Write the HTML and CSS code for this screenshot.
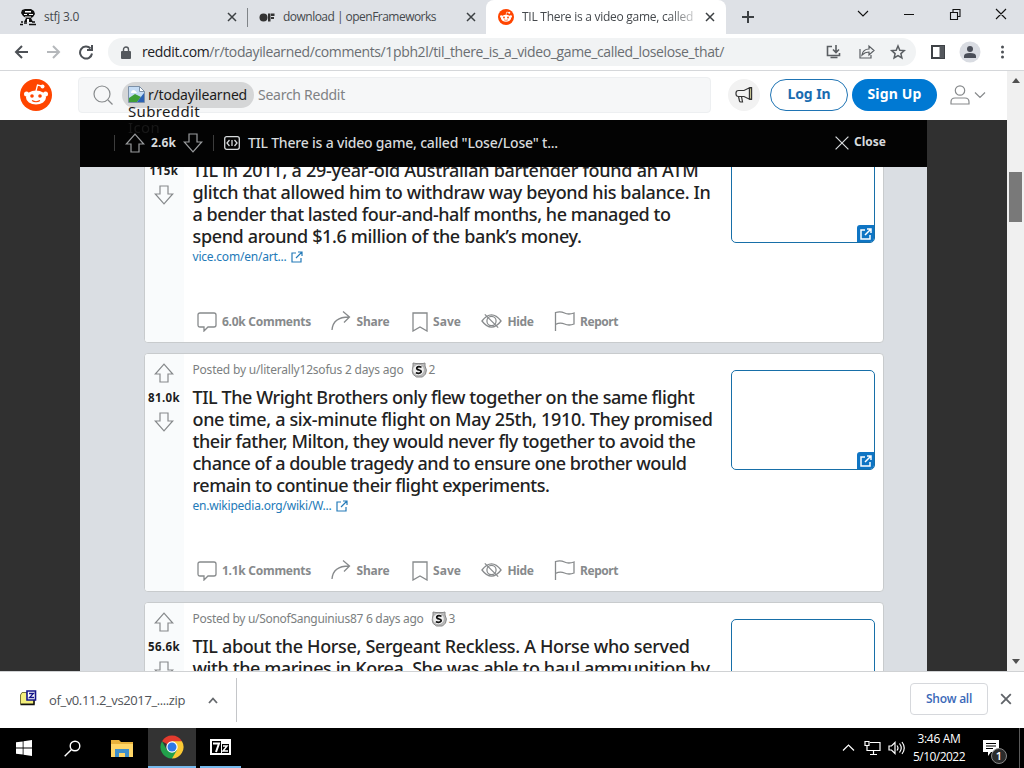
FILE: index.html
```html
<!DOCTYPE html>
<html lang="en">
<head>
<meta charset="utf-8">
<title>TIL There is a video game, called "Lose/Lose"</title>
<link rel="stylesheet" href="styles.css">
</head>
<body>
<svg class="defs" width="0" height="0">
  <symbol id="up" viewBox="0 0 20 20"><path d="M10 1.200 18.700 11H14v8H6v-8H1.300z"/></symbol>
  <symbol id="down" viewBox="0 0 20 20"><path d="M10 18.800 18.700 9H14V1H6v8H1.300z"/></symbol>
  <symbol id="x" viewBox="0 0 10 10"><path d="M1 1l8 8M9 1 1 9"/></symbol>
  <symbol id="snoo" viewBox="0 0 32 32"><circle cx="16" cy="16" r="16" fill="#ff4500"/><path d="M16 12l1.500-6 5 1.200" fill="none" stroke="#fff" stroke-width="1.300"/><circle cx="22.500" cy="7.500" r="2" fill="#fff"/><circle cx="6.500" cy="15" r="2.500" fill="#fff"/><circle cx="25.500" cy="15" r="2.500" fill="#fff"/><ellipse cx="16" cy="18.500" rx="10" ry="7" fill="#fff"/><circle cx="12" cy="17" r="1.800" fill="#ff4500"/><circle cx="20" cy="17" r="1.800" fill="#ff4500"/><path d="M12 21.500q4 2.500 8 0" fill="none" stroke="#ff4500" stroke-width="1.200"/></symbol>
  <symbol id="ext" viewBox="0 0 12 12"><path d="M5 2H1v9h9V7M7 1h4v4M11 1 5 7"/></symbol>
  <symbol id="comment" viewBox="0 0 20 20"><path d="M3 1h14q2 0 2 2v10q0 2-2 2h-6l-4 4v-4H3q-2 0-2-2V3q0-2 2-2z"/></symbol>
  <symbol id="share" viewBox="0 0 20 20"><path d="M1 19Q2 6 18 6M12 .500 18.500 6 13 11.500"/></symbol>
  <symbol id="save" viewBox="0 0 16 20"><path d="M1 1h14v18l-7-4-7 4z"/></symbol>
  <symbol id="hide" viewBox="0 0 22 16"><path d="M1 8Q11-5 21 8 11 21 1 8zM4 1l14 14"/><circle cx="11" cy="8" r="4.800"/></symbol>
  <symbol id="flag" viewBox="0 0 21 20"><path d="M1.500 20V1.500q5-1.500 9 .500t9.500 0V13q-5 2-9.500 0t-9 .500"/></symbol>
  <symbol id="award" viewBox="0 0 16 16"><path d="M2 4V1l3 .500h7L14 1v3q2.500 4 .500 8l-3 3h-6Q1 13 1.200 9z" fill="#bbb" stroke="#888"/><circle cx="7.500" cy="8" r="5.800" fill="#eee" stroke="#999" stroke-width=".600"/><path d="M10.500 5.200Q7 4 5.800 5.700 5.300 7.300 8 8t2 2.300Q8.500 12 4.800 10.800" fill="none" stroke="#111" stroke-width="1.700"/></symbol>
</svg>

<div class="tabs">
  <div class="tab tab-a">
    <svg width="18" height="18" viewBox="0 0 18 18"><path d="M3 2l3-1h6l3 2 1 3-2 3-2 1 2 4H5l2-4-3-2-2-3z" fill="#111"/><path d="M6 3h6v1.500H6zM5 6h3v1H5zm5 0h4v1h-4zM6 8.500h6v1H6zM8 11h2v3H8z" fill="#fff"/><path d="M1 16.500h3M5 15h3M10 16.500h7M2 14h2M13 14h3" stroke="#111" stroke-width="1.500"/></svg>
    <span class="tab-name" data-w="35">stfj 3.0</span>
    <svg class="tab-x" width="10" height="10"><use href="#x"/></svg>
  </div>
  <div class="tab tab-b">
    <svg width="16" height="9" viewBox="0 0 16 9"><circle cx="4.500" cy="4.500" r="4" fill="#333"/><path d="M9 .500h2.500v8H9zM12 .500h3.500V3H12zM12 4h3v2h-3z" fill="#333"/></svg>
    <span class="tab-name" data-w="153">download | openFrameworks</span>
    <svg class="tab-x" width="10" height="10"><use href="#x"/></svg>
  </div>
  <div class="tab tab-c">
    <svg width="16" height="16"><use href="#snoo"/></svg>
    <span class="tab-name fade" data-w="171">TIL There is a video game, called</span>
    <svg class="tab-x" width="10" height="10"><use href="#x"/></svg>
  </div>
  <div class="tab-rest">
    <svg class="plus" width="12" height="12" viewBox="0 0 12 12"><path d="M6 0v12M0 6h12"/></svg>
    <svg class="win" width="150" height="14" viewBox="0 0 150 14"><path d="M1 4l5 5 5-5M47 7.500h10M93.500 5.500h7v7h-7zM96 5V2.500h7v7H101M139 2l10 10M149 2l-10 10"/></svg>
  </div>
</div>

<div class="toolbar">
  <svg class="nav" width="80" height="16" viewBox="0 0 80 16"><path d="M14 8H2M8 2 2 8l6 6" stroke="#4d5156"/><path d="M33 8h12M39 2l6 6-6 6" stroke="#b5b8bb"/><path d="M76.500 4.500A6 6 0 1 0 78 9.500M78 1v5h-5" stroke="#4d5156"/></svg>
  <div class="omnibox">
    <svg width="10" height="13" viewBox="0 0 10 13"><path d="M1 5h8q1 0 1 1v6q0 1-1 1H1q-1 0-1-1V6q0-1 1-1z" fill="#54585d"/><path d="M2.500 5V3.500a2.500 2.500 0 0 1 5 0V5" fill="none" stroke="#54585d" stroke-width="1.400"/></svg>
    <span class="url" data-w="582"><b>reddit.com</b>/r/todayilearned/comments/1pbh2l/til_there_is_a_video_game_called_loselose_that/</span>
    <svg class="omni-icons" width="80" height="16" viewBox="0 0 80 16"><path d="M6 2.500H1.500v9h12V9M4.500 13.500h7M10 1v7M7 5.500l3 3 3-3" stroke-width="1.600"/><path d="M34 5v9h11v-3M36 11q1-6 7-6V2l5 4.500-5 4.500V8q-4 0-7 3z" stroke-width="1.200"/><path d="M72 2l1.800 4.200 4.500.400-3.400 3 1 4.400-3.900-2.400L68.100 14l1-4.400-3.400-3 4.500-.400z" stroke-width="1.500"/></svg>
  </div>
  <svg class="right-icons" width="76" height="22" viewBox="0 0 76 22"><path d="M2 5h12v12H2z" fill="none" stroke="#3e4246" stroke-width="2"/><path d="M9.500 5H14v12H9.500z" fill="#54585d"/><circle cx="40" cy="11" r="10.500" fill="#d9dce2"/><circle cx="40" cy="8" r="3" fill="#4a4e58"/><path d="M34 17v-2q0-3 6-3t6 3v2z" fill="#4a4e58"/><g fill="#4d5156"><circle cx="72.500" cy="6" r="1.500"/><circle cx="72.500" cy="11" r="1.500"/><circle cx="72.500" cy="16" r="1.500"/></g></svg>
</div>

<div class="viewport">
  <div class="page">
    <header class="header">
      <svg class="logo" width="32" height="32"><use href="#snoo"/></svg>
      <div class="search">
        <svg width="20" height="20" viewBox="0 0 20 20" fill="none" stroke="#878a8c" stroke-width="1.200"><circle cx="9" cy="9" r="8"/><path d="M15 15l4.500 4.500"/></svg>
        <div class="chip">
          <svg width="17" height="17" viewBox="0 0 17 17"><path d="M.500.500h11l5 5v11H.500z" fill="#c5dcf5" stroke="#7d91a8"/><path d="M1 16v-4l6-4 6 3-4 5z" fill="#3f9f38"/><path d="M16 7v9H9z" fill="#2c62b5"/><path d="M3 7q0-3 3-3 2 1 3 3z" fill="#fff"/><path d="M11.500.500v5h5z" fill="#fff" stroke="#7d91a8"/></svg>
          <span data-w="99">r/todayilearned</span>
          <div class="alt"><span data-w="72">Subreddit</span><span class="ghost" data-w="32">Icon</span></div>
        </div>
        <span class="hint" data-w="87">Search Reddit</span>
      </div>
      <div class="horn"><svg width="18" height="17" viewBox="0 0 18 17" fill="none" stroke="#333" stroke-width="1.200"><path d="M1 7q0-2.500 2.500-2.500H9L15 1.500h1.500v12H15L9 10.500H3.500Q1 10.500 1 8zM14.500 2v11M3.500 10.500l1 4.500q.300 1 1.300 1h1.700l-1-5.500"/><path d="M14.500 2h2v11h-2z" fill="#e8e4a8"/></svg></div>
      <div class="btn login"><span data-w="43">Log In</span></div>
      <div class="btn signup"><span data-w="54">Sign Up</span></div>
      <svg class="user" width="36" height="20" viewBox="0 0 36 20" fill="none" stroke="#878a8c" stroke-width="1.200"><circle cx="10" cy="5.500" r="4.700"/><path d="M1 19v-2q0-4 4-4h10q4 0 4 4v2zM25 7.500l5 5 5-5"/></svg>
    </header>

    <div class="stage">
      <div class="overlay">
        <div class="bar">
          <i class="rule r1"></i>
          <svg class="ic" width="20" height="20"><use href="#up"/></svg>
          <b class="bar-score"><span data-w="25">2.6k</span></b>
          <svg class="ic" width="20" height="20"><use href="#down"/></svg>
          <i class="rule r2"></i>
          <svg class="code" width="16" height="14" viewBox="0 0 16 14"><rect x=".700" y=".700" width="14.600" height="12.600" rx="2"/><path d="M5.500 4 3 7l2.500 3M10.500 4 13 7l-2.500 3M8 4v6"/></svg>
          <span class="bar-title" data-w="310">TIL There is a video game, called "Lose/Lose" t...</span>
          <svg class="bar-x" width="16" height="16"><use href="#x"/></svg>
          <b class="close"><span data-w="32">Close</span></b>
        </div>
        <div class="feed">
          <article class="card short">
            <div class="votes"><svg class="ic" width="20" height="20"><use href="#up"/></svg><b><span data-w="29">115k</span></b><svg class="ic" width="20" height="20"><use href="#down"/></svg></div>
            <div class="body">
              <div class="meta"></div>
              <h3><span data-w="506">TIL in 2011, a 29-year-old Australian bartender found an ATM</span><span data-w="518">glitch that allowed him to withdraw way beyond his balance. In</span><span data-w="478">a bender that lasted four-and-half months, he managed to</span><span data-w="389">spend around $1.6 million of the bank’s money.</span></h3>
              <div class="link"><span data-w="94">vice.com/en/art...</span><svg class="ic" width="12" height="12"><use href="#ext"/></svg></div>
              <div class="actions">
                <svg class="ic" width="20" height="20"><use href="#comment"/></svg><span class="a1" data-w="89">6.0k Comments</span>
                <svg class="ic up2" width="20" height="20"><use href="#share"/></svg><span class="a2" data-w="33">Share</span>
                <svg class="ic" width="16" height="20"><use href="#save"/></svg><span class="a3" data-w="28">Save</span>
                <svg class="ic up1" width="21" height="16"><use href="#hide"/></svg><span class="a4" data-w="26">Hide</span>
                <svg class="ic up1" width="21" height="20"><use href="#flag"/></svg><span class="a5" data-w="38">Report</span>
              </div>
            </div>
            <div class="thumb"><i><svg class="ic" width="12" height="12"><use href="#ext"/></svg></i></div>
          </article>

          <article class="card">
            <div class="votes"><svg class="ic" width="20" height="20"><use href="#up"/></svg><b><span data-w="32">81.0k</span></b><svg class="ic" width="20" height="20"><use href="#down"/></svg></div>
            <div class="body">
              <div class="meta"><span data-w="211">Posted by u/literally12sofus 2 days ago</span><svg width="16" height="16"><use href="#award"/></svg><span>2</span></div>
              <h3><span data-w="502">TIL The Wright Brothers only flew together on the same flight</span><span data-w="520">one time, a six-minute flight on May 25th, 1910. They promised</span><span data-w="503">their father, Milton, they would never fly together to avoid the</span><span data-w="494">chance of a double tragedy and to ensure one brother would</span><span data-w="357">remain to continue their flight experiments.</span></h3>
              <div class="link"><span data-w="139">en.wikipedia.org/wiki/W...</span><svg class="ic" width="12" height="12"><use href="#ext"/></svg></div>
              <div class="actions">
                <svg class="ic" width="20" height="20"><use href="#comment"/></svg><span class="a1" data-w="89">1.1k Comments</span>
                <svg class="ic up2" width="20" height="20"><use href="#share"/></svg><span class="a2" data-w="33">Share</span>
                <svg class="ic" width="16" height="20"><use href="#save"/></svg><span class="a3" data-w="28">Save</span>
                <svg class="ic up1" width="21" height="16"><use href="#hide"/></svg><span class="a4" data-w="26">Hide</span>
                <svg class="ic up1" width="21" height="20"><use href="#flag"/></svg><span class="a5" data-w="38">Report</span>
              </div>
            </div>
            <div class="thumb"><i><svg class="ic" width="12" height="12"><use href="#ext"/></svg></i></div>
          </article>

          <article class="card">
            <div class="votes"><svg class="ic" width="20" height="20"><use href="#up"/></svg><b><span data-w="32">56.6k</span></b><svg class="ic" width="20" height="20"><use href="#down"/></svg></div>
            <div class="body">
              <div class="meta"><span data-w="231">Posted by u/SonofSanguinius87 6 days ago</span><svg width="16" height="16"><use href="#award"/></svg><span>3</span></div>
              <h3><span data-w="497">TIL about the Horse, Sergeant Reckless. A Horse who served</span><span data-w="517">with the marines in Korea. She was able to haul ammunition by</span></h3>
            </div>
            <div class="thumb"></div>
          </article>
        </div>
      </div>
    </div>
  </div>
  <div class="scroll">
    <svg width="8" height="5" viewBox="0 0 8 5"><path d="M0 5 4 0l4 5z" fill="#505050"/></svg>
    <div class="handle"></div>
    <svg class="sdown" width="8" height="5" viewBox="0 0 8 5"><path d="M0 0h8L4 5z" fill="#505050"/></svg>
  </div>
</div>

<div class="downloads">
  <svg class="zip" width="18" height="16" viewBox="0 0 18 16"><path d="M1.500 5l1.500-2.500h5v2h7v9.500H1.500z" fill="#f4ef7c" stroke="#77743a"/><path d="M1.500 14.500h13.500V10" fill="none" stroke="#111" stroke-width="1.500"/><path d="M8 1h8.500v9H8z" fill="#fff" stroke="#15158a" stroke-width="1.600"/><path d="M10 3.500h4.500L10.500 7.500h4.500" fill="none" stroke="#15158a" stroke-width="1.300"/></svg>
  <span class="file" data-w="136">of_v0.11.2_vs2017_....zip</span>
  <svg class="chev" width="10" height="7" viewBox="0 0 10 7"><path d="M1 6l4-4.500L9 6"/></svg>
  <i class="sep"></i>
  <div class="showall"><span data-w="46">Show all</span></div>
  <svg class="dl-x" width="12" height="12"><use href="#x"/></svg>
</div>

<div class="taskbar">
  <div class="cell"><svg width="16" height="16" viewBox="0 0 16 16" fill="#fff"><path d="M0 2.300 6.700 1.400v6.200H0zM7.500 1.200 16 0v7.600H7.500zM0 8.400h6.700v6.200L0 13.700zM7.500 8.400H16V16l-8.500-1.200z"/></svg></div>
  <div class="cell"><svg width="17" height="17" viewBox="0 0 17 17" fill="none" stroke="#fff" stroke-width="1.400"><circle cx="11" cy="6" r="4.800"/><path d="M7.500 9.500.700 16.300"/></svg></div>
  <div class="cell wide"><svg width="22" height="19" viewBox="0 0 22 19"><path d="M0 1h8l2 2h12v15H0z" fill="#e8b23c"/><path d="M0 5h22v13H0z" fill="#ffd667"/><path d="M4 10h14v8h-4v-4H8v4H4z" fill="#3f8fca"/></svg></div>
  <div class="cell active"><svg width="24" height="24" viewBox="0 0 24 24"><path d="M12 12 2.040 6.250A11.500 11.500 0 0 1 21.960 6.250z" fill="#e33b2e"/><path d="M12 12V6.250h9.960A11.500 11.500 0 0 1 12 23.500z" fill="#fcc934"/><path d="M2.040 6.250 7 14.900l10 0L12 23.500A11.500 11.500 0 0 1 2.040 6.250z" fill="#22a04b"/><circle cx="12" cy="12" r="5.700" fill="#fff"/><circle cx="12" cy="12" r="4.500" fill="#2f78e6"/></svg></div>
  <div class="cell seven"><svg width="21" height="16" viewBox="0 0 21 16"><path d="M0 0h21v16H0z" fill="#fff"/><path d="M2 2h9v12H2zM12 5h7v9h-7z" fill="#000"/><path d="M3 4.500h6L6 13" fill="none" stroke="#fff" stroke-width="2"/><path d="M13 7h4l-4 5h5" fill="none" stroke="#fff" stroke-width="1.500"/></svg></div>
  <div class="tray">
    <svg width="63" height="16" viewBox="0 0 63 16" fill="none" stroke="#fff" stroke-width="1.200"><path d="M1 10.500l5.500-5.500 5.500 5.500M28 2.500h10v8H25V7M23 1.500h4v4h-4zM25 5v2M31.500 10.500v4M28 14.500h7M47 6v4h2.500l3.500 3.500v-11L49.500 6zM55 5.500q2 2.500 0 5M57.500 3.500q3.500 4.500 0 9M60 2q4.500 6 0 12"/></svg>
    <div class="clock"><span data-w="43">3:46 AM</span><span data-w="52">5/10/2022</span></div>
    <div class="note"><svg width="16" height="16" viewBox="0 0 16 16"><path d="M0 0h16v12H8l-3 4v-4H0z" fill="#fff"/><path d="M3 3.500h10M3 6h10M3 8.500h7" stroke="#000"/></svg><em>1</em></div>
    <i class="peek"></i>
  </div>
</div>
<script src="fit.js"></script>
</body>
</html>
```
FILE: fit.js
```js
// Tracks each label so that its run has the width given in data-w.
document.querySelectorAll('[data-w]').forEach(function (el) {
  var target = Number(el.dataset.w);
  el.style.letterSpacing = (target - el.getBoundingClientRect().width) / el.textContent.length + 'px';
});
```
FILE: styles.css
```css
* { box-sizing: border-box; }
body { margin: 0; width: 1024px; height: 768px; overflow: hidden; display: flex; flex-direction: column; background: #fff; font: 12px/16px "Noto Sans", "Open Sans", sans-serif; color: #1c1c1c; }
svg { flex: none; display: block; }
.defs { position: absolute; }
span { white-space: nowrap; }
[data-w] { display: inline-block; width: max-content; flex: none; }
i { flex: none; }
.ic { fill: none; stroke: #878a8c; stroke-width: 1.200; }

.tabs { height: 34px; flex: none; display: flex; background: #dee1e6; font: 12px/16px "Open Sans", sans-serif; color: #45494d; }
.tab { display: flex; align-items: center; flex: none; }
.tab-x { margin-left: auto; stroke: #3c4043; stroke-width: 1.500; }
.tab-a { width: 248px; padding: 0 11px 0 19px; gap: 7px; position: relative; }
.tab-a::after { content: ""; position: absolute; right: 0; top: 8px; width: 1px; height: 19px; background: #808488; }
.tab-b { width: 238px; padding: 0 10px 0 11px; gap: 8px; }
.tab-c { width: 240px; background: #fff; border-radius: 8px 8px 0 0; padding: 0 11px 0 12px; gap: 8px; }
.fade { -webkit-mask-image: linear-gradient(90deg, #000 85%, rgba(0,0,0,.3)); mask-image: linear-gradient(90deg, #000 85%, rgba(0,0,0,.3)); }
.tab-rest { flex: 1; display: flex; padding-left: 16px; }
.plus { margin-top: 11px; stroke: #3c4043; stroke-width: 2; }
.win { margin: 7px 17px 0 auto; fill: none; stroke: #111; stroke-width: 1.100; }

.toolbar { height: 37px; flex: none; display: flex; align-items: center; border-bottom: 1px solid #d5d7da; background: #fff; }
.nav { margin-left: 14px; fill: none; stroke-width: 2; }
.omnibox { width: 808px; height: 28px; margin-left: 14px; border-radius: 14px; background: #f1f3f4; display: flex; align-items: center; padding: 0 10px 0 13px; }
.url { margin-left: 11px; font: 14px/20px "Open Sans", sans-serif; color: #6a6e72; }
.url b { font-weight: 400; color: #202124; }
.omni-icons { margin-left: auto; fill: none; stroke: #5a5e62; }
.right-icons { margin-left: 14px; }

.viewport { height: 600px; flex: none; display: flex; overflow: hidden; }
.page { width: 1007px; flex: none; display: flex; flex-direction: column; }
.header { height: 49px; flex: none; display: flex; align-items: center; background: #fff; padding: 0 0 2px 20px; }
.search { width: 633px; height: 36px; margin-left: 26px; border: 1px solid #edeff1; border-radius: 4px; background: #f6f7f8; display: flex; align-items: center; padding-left: 14px; font-size: 14px; }
.chip { position: relative; width: 132px; height: 26px; margin-left: 9px; border-radius: 13px; background: #d5d6d7; display: flex; align-items: center; padding-left: 6px; gap: 3px; }
.alt { position: absolute; left: 6px; top: 21px; z-index: 3; display: flex; flex-direction: column; font-size: 15px; line-height: 16px; }
.ghost { opacity: .5; color: #2c2c2c; }
.hint { margin-left: 4px; color: #808284; }
.horn { width: 32px; height: 32px; margin-left: 17px; border-radius: 50%; background: #f2f2f2; display: flex; align-items: center; justify-content: center; }
.btn { height: 32px; border-radius: 16px; display: flex; align-items: center; justify-content: center; font-size: 14px; font-weight: 700; padding-bottom: 2px; }
.login { width: 78px; margin-left: 10px; border: 1px solid #1f74b4; color: #1a6cb0; }
.signup { width: 85px; margin-left: 4px; background: #0079d3; color: #fff; }
.user { margin-left: 13px; }

.stage { flex: 1; min-height: 0; padding: 0 80px; background: #303030; display: flex; }
.overlay { width: 847px; background: #dadee3; display: flex; flex-direction: column; overflow: hidden; }
.bar { position: relative; z-index: 1; height: 47px; flex: none; background: #030303; color: #d7dadc; display: flex; align-items: center; padding: 0 0 1px 34px; }
.bar .ic { stroke: #9a9c9e; }
.rule { width: 1px; height: 16px; background: #3c3c3c; }
.r1 { margin-right: 10px; }
.r2 { margin: 0 10px; }
.bar-score { font-size: 12px; margin: 0 7px 0 6px; }
.bar-score span, .close span { display: block; }
.code { fill: none; stroke: #d7dadc; stroke-width: 1.300; }
.bar-title { margin-left: 8px; font-size: 14px; font-weight: 500; }
.bar-x { margin-left: 276px; stroke: #d7dadc; stroke-width: .750; }
.close { margin: -2px 0 0 4px; font-size: 12px; }

.feed { flex: 1; min-height: 0; margin-top: -41px; padding: 0 43px 0 64px; display: flex; flex-direction: column; gap: 10px; }
.card { width: 740px; height: 239px; flex: none; display: flex; border: 1px solid #c8cbcd; border-radius: 4px; background: #fff; overflow: hidden; }
.short { height: 217px; }
.votes { width: 39px; flex: none; background: #f9fbfc; display: flex; flex-direction: column; align-items: center; padding: 9px 1px 0 0; }
.votes b { font-size: 11.5px; line-height: 16px; margin: 7px 0 6px; }
.votes b span { display: block; }
.body { width: 538px; flex: none; padding: 7px 0 9px 8.500px; display: flex; flex-direction: column; }
.meta { height: 17px; flex: none; display: flex; align-items: center; color: #7c7f81; font-size: 12px; }
.meta svg { margin: 0 2px 0 7px; }
h3 { margin: 8px 0 0; display: flex; flex-direction: column; font-size: 18px; line-height: 22px; font-weight: 500; color: #222; }
.link { height: 20px; display: flex; align-items: center; gap: 4px; color: #247ab8; font-size: 12px; }
.link .ic { stroke: #247ab8; }
.actions { margin-top: auto; height: 22px; display: flex; align-items: center; padding-left: 4px; color: #878a8c; font-weight: 700; }
.actions .ic { stroke-width: 1.300; }
.actions span { margin-left: 5.500px; }
.up1 { margin-top: -2px; }
.up2 { margin-top: -3px; }
.a1 { margin-right: 20px; }
.a2 { margin-right: 22px; }
.a3 { margin-right: 20px; }
.a4 { margin-right: 20px; }
.thumb { width: 144px; height: 100px; margin: 16px 0 0 9px; border: 1px solid #176fa8; border-radius: 5px; display: flex; align-items: flex-end; justify-content: flex-end; overflow: hidden; }
.thumb i { width: 17px; height: 17px; border-radius: 3px 0 0 0; background: #0f75c4; display: flex; align-items: center; justify-content: center; }
.thumb .ic { stroke: #fff; stroke-width: 1.500; }

.scroll { width: 17px; background: #f0f0f0; display: flex; flex-direction: column; align-items: center; padding-top: 7px; }
.handle { width: 13px; height: 50px; margin-top: 89px; background: #797979; }
.sdown { margin: auto 0 7px; }

.downloads { height: 57px; flex: none; display: flex; align-items: center; border-top: 1px solid #d0d2d4; background: #fff; font: 13px/18px "Open Sans", sans-serif; color: #505357; padding-left: 19px; }
.zip { margin-top: -4px; }
.file { margin-left: 12px; }
.chev { margin-left: 23px; fill: none; stroke: #66696d; stroke-width: 1.800; }
.sep { width: 1px; height: 44px; margin-left: 18px; background: #c4c6c9; }
.showall { width: 78px; height: 32px; margin: -3px 0 0 673px; border: 1px solid #d6d8dc; border-radius: 4px; display: flex; align-items: center; justify-content: center; color: #3a68b8; font-size: 12px; font-weight: 600; }
.dl-x { margin: -2px 0 0 12px; stroke: #5f6368; stroke-width: 1.500; }

.taskbar { height: 40px; flex: none; background: #000; display: flex; }
.cell { width: 48px; height: 40px; flex: none; display: flex; align-items: center; justify-content: center; }
.wide { width: 52px; }
.active { background: #333; border-bottom: 2px solid #76b9ed; }
.seven { width: 41px; margin-left: 4px; border-bottom: 2px solid #76b9ed; }
.tray { margin-left: auto; display: flex; align-items: center; color: #fff; font-family: "Open Sans", sans-serif; }
.clock { width: 54px; margin-left: 7px; display: flex; flex-direction: column; align-items: center; line-height: 18px; margin-top: -1px; }
.note { position: relative; margin: -1px 20px 0 17px; }
.note em { position: absolute; left: 8px; top: 8px; width: 16px; height: 16px; border: 1px solid #888; border-radius: 50%; background: #2b2b2b; font: 600 11px/14px "Open Sans", sans-serif; text-align: center; }
.peek { width: 1px; height: 40px; margin-right: 4px; background: #5a5a5a; }
```
